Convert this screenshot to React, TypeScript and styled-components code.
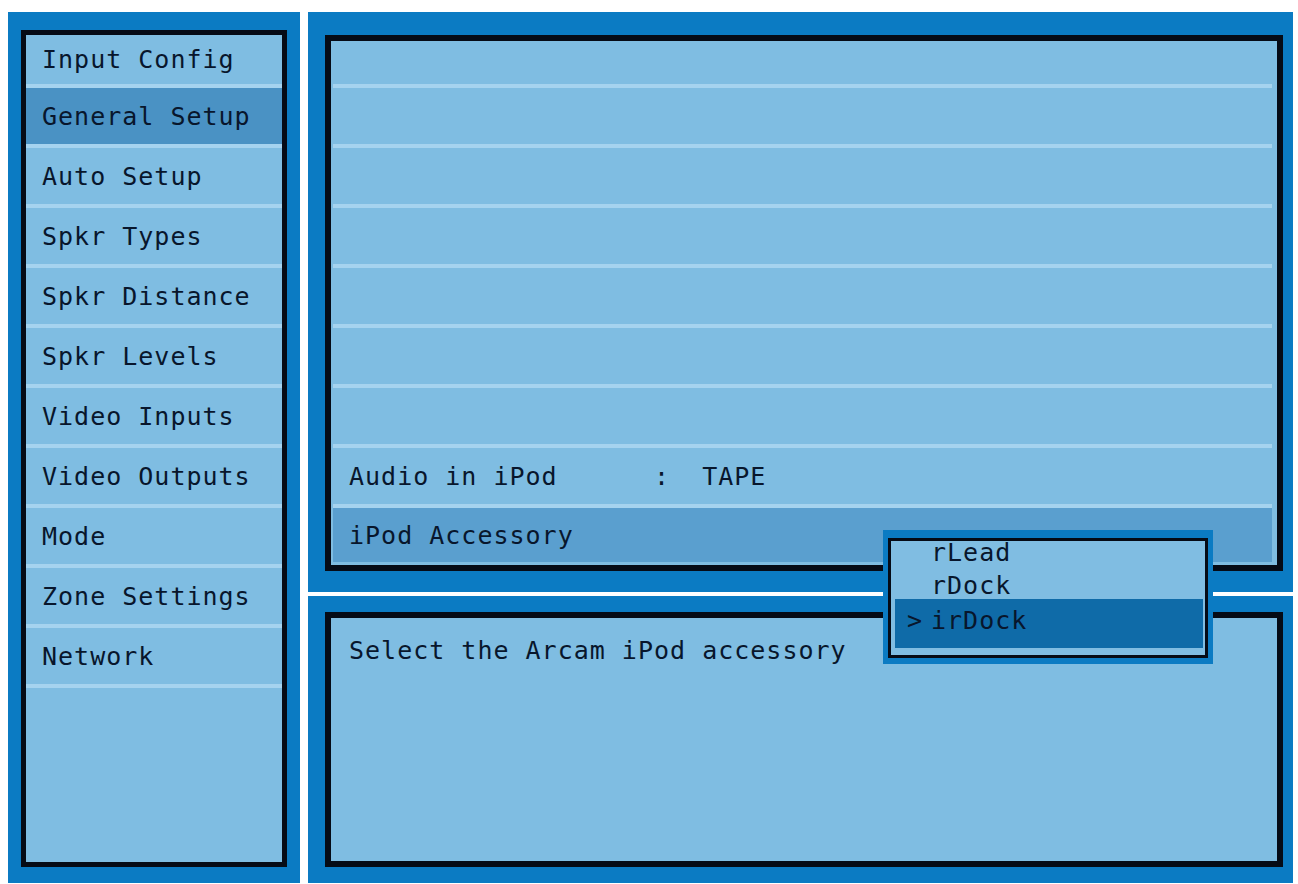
import styled, { createGlobalStyle } from "styled-components";

const GlobalStyle = createGlobalStyle`
  body {
    margin: 0;
    background: #ffffff;
    font-family: "DejaVu Sans Mono", "Liberation Mono", monospace;
  }
`;

const menuItems = [
  "Input Config",
  "General Setup",
  "Auto Setup",
  "Spkr Types",
  "Spkr Distance",
  "Spkr Levels",
  "Video Inputs",
  "Video Outputs",
  "Mode",
  "Zone Settings",
  "Network",
];

// six unused rows sit above the two iPod settings
const emptyRows = [0, 1, 2, 3, 4, 5];

const accessoryOptions = ["rLead", "rDock", "irDock"];

function App() {
  const activeMenu = "General Setup";
  const selectedOption = "irDock";

  return (
    <Screen>
      <GlobalStyle />
      <SideFrame>
        <SideInner>
          {menuItems.map((item, i) => (
            <MenuItem key={item} first={i === 0} active={item === activeMenu}>
              {item}
            </MenuItem>
          ))}
          <MenuTail />
        </SideInner>
      </SideFrame>

      <RightColumn>
        <SettingsFrame>
          <SettingsInner>
            <SettingsHead />
            {emptyRows.map((n) => (
              <SettingRow key={n} />
            ))}
            <SettingRow>
              <SettingText>{"Audio in iPod      :  TAPE"}</SettingText>
            </SettingRow>
            <SettingRow active last>
              <SettingText>iPod Accessory</SettingText>
            </SettingRow>
          </SettingsInner>
        </SettingsFrame>

        <HelpFrame>
          <HelpInner>
            <HelpText>Select the Arcam iPod accessory</HelpText>
          </HelpInner>
        </HelpFrame>
      </RightColumn>

      <Popup>
        <PopupInner>
          {accessoryOptions.map((opt) => (
            <Option key={opt} selected={opt === selectedOption}>
              <Marker>{opt === selectedOption ? ">" : ""}</Marker>
              {opt}
            </Option>
          ))}
        </PopupInner>
      </Popup>
    </Screen>
  );
}

const Screen = styled.div`
  position: relative;
  box-sizing: border-box;
  width: 1298px;
  height: 884px;
  padding: 12px 5px 1px 8px;
  display: grid;
  grid-template-columns: 292px 985px;
  column-gap: 8px;
  color: #08162c;
  font-size: 25px;
  letter-spacing: 1px;
`;

const SideFrame = styled.div`
  background: #0b7bc3;
  padding: 18px 13px 16px 13px;
  box-sizing: border-box;
`;

const SideInner = styled.div`
  height: 100%;
  box-sizing: border-box;
  border: 5px solid #050b16;
  background: #7fbde2;
  display: flex;
  flex-direction: column;
`;

const MenuItem = styled.div<{ first?: boolean; active?: boolean }>`
  flex: none;
  box-sizing: border-box;
  height: ${(p) => (p.first ? "49px" : "60px")};
  border-top: ${(p) => (p.first ? "none" : "4px solid #a5d3ef")};
  background: ${(p) => (p.active ? "#4a92c4" : "transparent")};
  background-clip: padding-box;
  padding-left: 16px;
  display: flex;
  align-items: center;
  white-space: pre;
`;

const MenuTail = styled.div`
  border-top: 4px solid #a5d3ef;
`;

const RightColumn = styled.div`
  display: flex;
  flex-direction: column;
  gap: 4px;
`;

const SettingsFrame = styled.div`
  height: 580px;
  box-sizing: border-box;
  background: #0b7bc3;
  padding: 23px 10px 21px 17px;
`;

const SettingsInner = styled.div`
  height: 100%;
  box-sizing: border-box;
  border: 6px solid #050b16;
  background: #7fbde2;
  padding-bottom: 3px;
  display: flex;
  flex-direction: column;
`;

const SettingsHead = styled.div`
  flex: none;
  height: 43px;
`;

const SettingRow = styled.div<{ active?: boolean; last?: boolean }>`
  flex: ${(p) => (p.last ? "1" : "none")};
  box-sizing: border-box;
  height: ${(p) => (p.last ? "auto" : "60px")};
  margin: 0 5px 0 2px;
  border-top: 4px solid #a5d3ef;
  background: ${(p) => (p.active ? "#5a9fcf" : "transparent")};
  background-clip: padding-box;
  padding-left: 16px;
  display: flex;
  align-items: center;
`;

const SettingText = styled.span`
  white-space: pre;
`;

const HelpFrame = styled.div`
  flex: 1;
  box-sizing: border-box;
  background: #0b7bc3;
  padding: 16px 10px 16px 17px;
`;

const HelpInner = styled.div`
  height: 100%;
  box-sizing: border-box;
  border: 6px solid #050b16;
  background: #7fbde2;
  padding: 18px 18px;
`;

const HelpText = styled.div`
  line-height: 30px;
  white-space: pre;
`;

const Popup = styled.div`
  position: absolute;
  left: 883px;
  top: 530px;
  width: 330px;
  height: 134px;
  box-sizing: border-box;
  background: #0b7bc3;
  padding: 8px 5px 6px 5px;
`;

const PopupInner = styled.div`
  height: 100%;
  box-sizing: border-box;
  border: 3px solid #050b16;
  background: #80bde2;
  padding: 0 2px 7px 4px;
  display: flex;
  flex-direction: column;
`;

const Option = styled.div<{ selected?: boolean }>`
  flex: none;
  box-sizing: border-box;
  height: ${(p) => (p.selected ? "49px" : "33px")};
  margin-top: ${(p) => (p.selected ? "-8px" : "0")};
  line-height: ${(p) => (p.selected ? "44px" : "24px")};
  background: ${(p) => (p.selected ? "#0f6ba8" : "transparent")};
  padding-left: 12px;
  white-space: pre;
`;

const Marker = styled.span`
  display: inline-block;
  width: 24px;
`;

export default App;
